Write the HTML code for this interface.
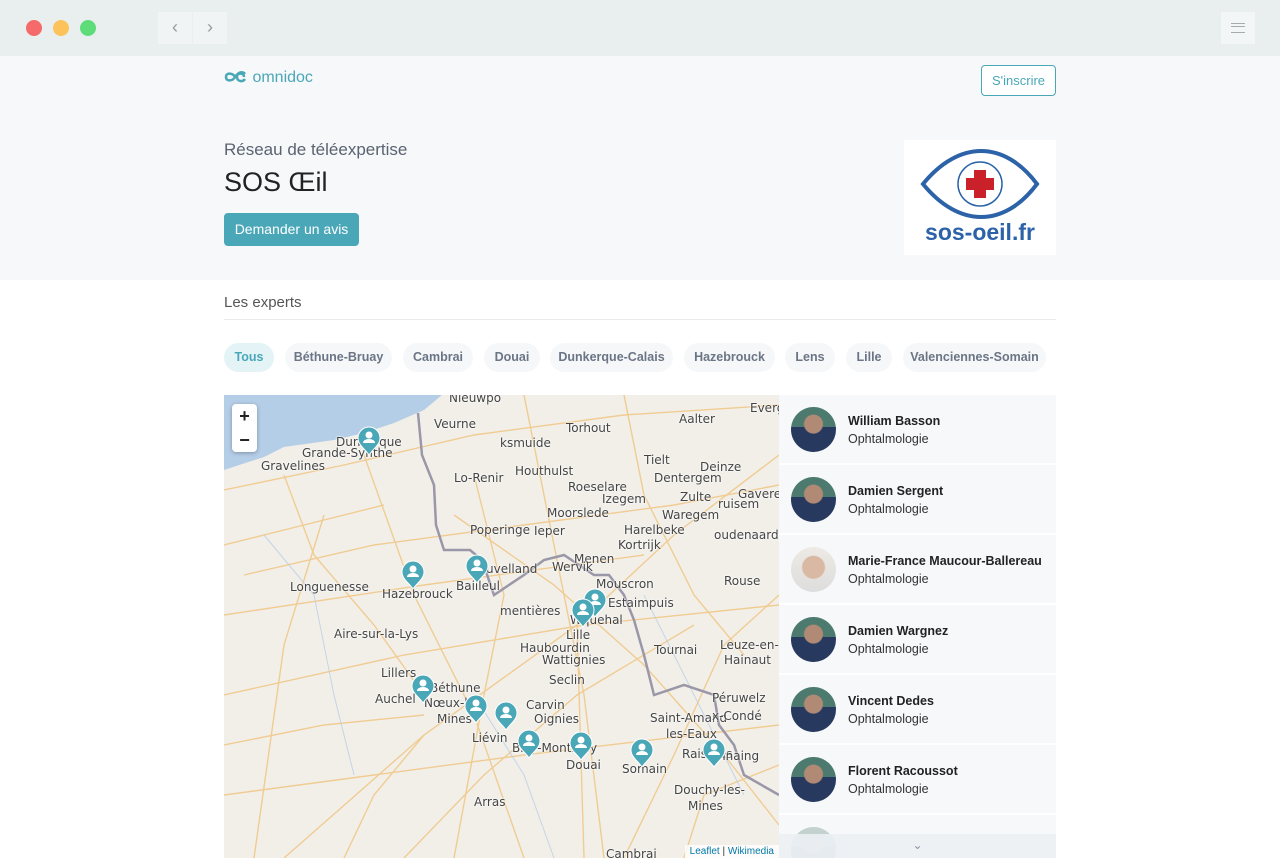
<!DOCTYPE html>
<html><head><meta charset="utf-8"><style>
*{box-sizing:border-box;margin:0;padding:0}
body{width:1280px;height:868px;overflow:hidden;background:#fff;font-family:"Liberation Sans",sans-serif;position:relative}
.chrome{position:absolute;left:0;top:0;width:1280px;height:56px;background:#e9eeee}
.dot{position:absolute;top:20px;width:16px;height:16px;border-radius:50%}
.nav{position:absolute;top:12px;width:34px;height:32px;background:#f1f4f4;color:#999;font-size:18px;text-align:center;line-height:30px}
.hero{position:absolute;left:0;top:56px;width:1280px;height:224px;background:#f7f8fa}
.abs{position:absolute}
.chip{position:absolute;top:343px;height:29px;border-radius:15px;background:#f5f7f9;color:#6b7585;font-size:12.5px;font-weight:bold;line-height:29px;text-align:center}
.map{position:absolute;left:224px;top:395px;width:555px;height:463px;background:#f2efe9;overflow:hidden}
.lbl{position:absolute;font-family:"DejaVu Sans",sans-serif;font-size:12px;color:#444;white-space:nowrap;text-shadow:0 0 2px #fff,0 0 2px #fff}
.row{position:absolute;left:779px;width:277px;height:68px;background:#f7f8fa}
.av{position:absolute;left:12px;top:12px;width:45px;height:45px;border-radius:50%;background:radial-gradient(circle at 50% 38%,#b08a74 0 9px,transparent 10px),linear-gradient(#4d7a6e 0 45%,#27395e 45%)}
.nm{position:absolute;left:69px;top:19px;font-size:12.5px;font-weight:bold;color:#222}
.sp{position:absolute;left:69px;top:37px;font-size:12.5px;color:#333}
</style></head><body>
<div class="chrome">
<div class="dot" style="left:26px;background:#f56a6a"></div>
<div class="dot" style="left:53px;background:#fbc35a"></div>
<div class="dot" style="left:80px;background:#5fdc7a"></div>
<div class="nav" style="left:158px">‹</div><div class="nav" style="left:193px">›</div>
<div class="abs" style="left:1221px;top:12px;width:34px;height:32px;background:#f3f6f6"><div style="position:absolute;left:10px;top:11px;width:14px;border-top:1px solid #aaa;height:4px;border-bottom:1px solid #aaa"></div><div style="position:absolute;left:10px;top:20px;width:14px;border-top:1px solid #aaa"></div></div>
</div>
<div class="hero"></div>
<div class="abs" style="left:224px;top:69px;color:#4aa7b8;font-size:16px">
<svg width="24" height="14" viewBox="0 0 24 14" style="vertical-align:-2px"><path d="M11 7c-2-4-9-5-9 0s7 4 9 0c2-4 9-5 9 0M21 4c-2-3-8-2-8 3s6 5 8 2" fill="none" stroke="#4aa7b8" stroke-width="2.5"/></svg> omnidoc</div>
<div class="abs" style="left:981px;top:65px;width:75px;height:31px;border:1px solid #4aa7b8;border-radius:4px;color:#4aa7b8;font-size:13px;text-align:center;line-height:29px;background:#fff">S'inscrire</div>
<div class="abs" style="left:224px;top:140px;font-size:17px;color:#5a6370">Réseau de téléexpertise</div>
<div class="abs" style="left:224px;top:167px;font-size:27px;color:#222">SOS Œil</div>
<div class="abs" style="left:224px;top:213px;width:135px;height:33px;background:#4aa7b8;border-radius:4px;color:#fff;font-size:14px;text-align:center;line-height:33px">Demander un avis</div>
<div class="abs" style="left:904px;top:140px;width:152px;height:115px;background:#fff">
<svg width="152" height="115"><path d="M19 44C55 0 100 0 133 44C100 88 55 88 19 44Z" fill="none" stroke="#2c63a8" stroke-width="4"/><circle cx="76" cy="44" r="22" fill="none" stroke="#2c63a8" stroke-width="1.5"/><path d="M70 30h12v8h8v12h-8v8h-12v-8h-8v-12h8z" fill="#c9202a"/><text x="76" y="100" text-anchor="middle" font-family="Liberation Sans" font-weight="bold" font-size="23" fill="#2c63a8">sos-oeil.fr</text></svg></div>
<div class="abs" style="left:224px;top:294px;font-size:15px;color:#555">Les experts</div>
<div class="abs" style="left:224px;top:319px;width:832px;border-top:1px solid #e8eaed"></div>
<div class="chip" style="left:224px;width:50px;background:#e3f3f6;color:#4aa7b8">Tous</div>
<div class="chip" style="left:285px;width:107px">Béthune-Bruay</div>
<div class="chip" style="left:403px;width:70px">Cambrai</div>
<div class="chip" style="left:484px;width:56px">Douai</div>
<div class="chip" style="left:550px;width:123px">Dunkerque-Calais</div>
<div class="chip" style="left:684px;width:91px">Hazebrouck</div>
<div class="chip" style="left:785px;width:50px">Lens</div>
<div class="chip" style="left:846px;width:46px">Lille</div>
<div class="chip" style="left:903px;width:143px">Valenciennes-Somain</div>
<div class="map">
<svg width="555" height="463" style="position:absolute;left:0;top:0">
<path d="M0 75L40 62L60 52L110 45L140 38L170 28L200 15L218 0L0 0Z" fill="#b5cee8"/>
<g fill="none" stroke="#f0c98a" stroke-width="1.4" opacity=".9">
<path d="M0 95L120 70L250 40L400 20L555 10"/><path d="M20 180L150 150L300 130L450 110L555 90"/><path d="M0 300L180 260L360 230L555 210"/><path d="M60 463L200 340L353 230L450 140L555 60"/><path d="M140 60L190 200L250 320L300 463"/><path d="M300 0L330 150L360 300L380 463"/><path d="M0 400L150 380L300 360L555 330"/><path d="M400 463L450 360L500 250L555 200"/><path d="M100 120L60 250L30 463"/><path d="M230 120L330 190L420 270L500 360L555 430"/><path d="M0 220L200 190L420 160"/><path d="M180 463L260 380L353 300L470 230"/><path d="M353 230L360 463"/><path d="M250 80L280 200L260 300L230 463"/><path d="M0 150L80 130L160 110"/><path d="M60 80L90 160L150 230L200 300"/><path d="M400 0L420 100L470 200L520 260"/><path d="M0 350L100 330L200 320"/><path d="M120 463L150 400L200 340"/><path d="M460 463L480 400L555 370"/></g>
<g fill="none" stroke="#b8cde6" stroke-width="1" opacity=".8"><path d="M40 140L90 200L110 300L130 380"/><path d="M420 200L470 300L520 400"/><path d="M250 300L300 380L330 463"/></g>
<path d="M194 18L198 60L210 90L212 130L220 155L246 155L258 165L270 200L300 180L320 165L340 160L355 170L370 180L385 180L400 200L410 225L420 260L430 300L460 290L490 300L495 330L510 350L520 380L555 400" fill="none" stroke="#9a97a8" stroke-width="2.5"/>
</svg>
<div class="abs" style="left:8px;top:9px;width:25px;height:48px;background:#fff;border-radius:4px;box-shadow:0 1px 4px rgba(0,0,0,.3);font-size:18px;font-weight:bold;text-align:center;line-height:24px;color:#222">+<br>−</div>
<div class="lbl" style="left:225px;top:-4px">Nieuwpo</div><div class="lbl" style="left:210px;top:22px">Veurne</div><div class="lbl" style="left:342px;top:26px">Torhout</div><div class="lbl" style="left:455px;top:17px">Aalter</div><div class="lbl" style="left:526px;top:6px">Everg</div>
<div class="lbl" style="left:112px;top:40px">Dunkerque</div><div class="lbl" style="left:78px;top:51px">Grande-Synthe</div><div class="lbl" style="left:37px;top:64px">Gravelines</div>
<div class="lbl" style="left:276px;top:41px">ksmuide</div><div class="lbl" style="left:420px;top:58px">Tielt</div><div class="lbl" style="left:476px;top:65px">Deinze</div><div class="lbl" style="left:291px;top:69px">Houthulst</div><div class="lbl" style="left:344px;top:85px">Roeselare</div><div class="lbl" style="left:430px;top:76px">Dentergem</div><div class="lbl" style="left:230px;top:76px">Lo-Renir</div><div class="lbl" style="left:378px;top:97px">Izegem</div><div class="lbl" style="left:456px;top:95px">Zulte</div><div class="lbl" style="left:514px;top:92px">Gavere</div><div class="lbl" style="left:323px;top:111px">Moorslede</div><div class="lbl" style="left:246px;top:128px">Poperinge</div><div class="lbl" style="left:310px;top:129px">Ieper</div><div class="lbl" style="left:400px;top:128px">Harelbeke</div><div class="lbl" style="left:438px;top:113px">Waregem</div><div class="lbl" style="left:494px;top:102px">ruisem</div><div class="lbl" style="left:394px;top:143px">Kortrijk</div><div class="lbl" style="left:490px;top:133px">oudenaarde</div><div class="lbl" style="left:350px;top:157px">Menen</div><div class="lbl" style="left:328px;top:165px">Wervik</div><div class="lbl" style="left:262px;top:167px">uvelland</div>
<div class="lbl" style="left:66px;top:185px">Longuenesse</div><div class="lbl" style="left:158px;top:192px">Hazebrouck</div><div class="lbl" style="left:232px;top:184px">Bailleul</div><div class="lbl" style="left:372px;top:182px">Mouscron</div><div class="lbl" style="left:384px;top:201px">Estaimpuis</div><div class="lbl" style="left:500px;top:179px">Rouse</div><div class="lbl" style="left:276px;top:209px">mentières</div><div class="lbl" style="left:346px;top:218px">Wquehal</div><div class="lbl" style="left:342px;top:233px">Lille</div><div class="lbl" style="left:110px;top:232px">Aire-sur-la-Lys</div><div class="lbl" style="left:296px;top:246px">Haubourdin</div><div class="lbl" style="left:318px;top:258px">Wattignies</div><div class="lbl" style="left:430px;top:248px">Tournai</div><div class="lbl" style="left:496px;top:243px">Leuze-en-</div><div class="lbl" style="left:500px;top:258px">Hainaut</div><div class="lbl" style="left:325px;top:278px">Seclin</div><div class="lbl" style="left:157px;top:271px">Lillers</div><div class="lbl" style="left:206px;top:286px">Béthune</div><div class="lbl" style="left:151px;top:297px">Auchel</div><div class="lbl" style="left:200px;top:301px">Nœux-l</div><div class="lbl" style="left:302px;top:303px">Carvin</div><div class="lbl" style="left:488px;top:296px">Péruwelz</div><div class="lbl" style="left:213px;top:317px">Mines</div><div class="lbl" style="left:310px;top:317px">Oignies</div><div class="lbl" style="left:426px;top:316px">Saint-Amand</div><div class="lbl" style="left:488px;top:314px">x-Condé</div><div class="lbl" style="left:248px;top:336px">Liévin</div><div class="lbl" style="left:442px;top:332px">les-Eaux</div><div class="lbl" style="left:288px;top:346px">Billy-Montigny</div><div class="lbl" style="left:342px;top:363px">Douai</div><div class="lbl" style="left:398px;top:367px">Somain</div><div class="lbl" style="left:458px;top:352px">Raismes</div><div class="lbl" style="left:494px;top:354px">nnaing</div><div class="lbl" style="left:450px;top:388px">Douchy-les-</div><div class="lbl" style="left:464px;top:404px">Mines</div><div class="lbl" style="left:250px;top:400px">Arras</div><div class="lbl" style="left:382px;top:452px">Cambrai</div>
<svg width="555" height="463" style="position:absolute;left:0;top:0">
<defs><g id="pin"><path d="M0 0C-4-6-11-10-11-17A11 11 0 0 1 11-17C11-10 4-6 0 0Z" fill="#4aa7b8" stroke="#fff" stroke-width="1"/><circle cx="0" cy="-20" r="3.5" fill="#fff"/><path d="M-6-12a6 4 0 0 1 12 0z" fill="#fff"/></g></defs>
<use href="#pin" x="145" y="60"/><use href="#pin" x="189" y="194"/><use href="#pin" x="253" y="188"/><use href="#pin" x="371" y="222"/><use href="#pin" x="359" y="232"/><use href="#pin" x="199" y="308"/><use href="#pin" x="252" y="328"/><use href="#pin" x="282" y="335"/><use href="#pin" x="305" y="363"/><use href="#pin" x="357" y="365"/><use href="#pin" x="418" y="372"/><use href="#pin" x="490" y="372"/>
</svg>
<div class="abs" style="right:0;bottom:0;background:rgba(255,255,255,.8);font-size:10px;color:#0078a8;padding:1px 5px">Leaflet <span style="color:#333">|</span> Wikimedia</div>
</div>
<div class="row" style="top:395px"><div class="av"></div><div class="nm">William Basson</div><div class="sp">Ophtalmologie</div></div>
<div class="row" style="top:465px"><div class="av"></div><div class="nm">Damien Sergent</div><div class="sp">Ophtalmologie</div></div>
<div class="row" style="top:535px"><div class="av" style="background:radial-gradient(circle at 50% 45%,#d9b9a3 0 11px,transparent 12px),linear-gradient(#eeeae4,#ddd)"></div><div class="nm">Marie-France Maucour-Ballereau</div><div class="sp">Ophtalmologie</div></div>
<div class="row" style="top:605px"><div class="av"></div><div class="nm">Damien Wargnez</div><div class="sp">Ophtalmologie</div></div>
<div class="row" style="top:675px"><div class="av"></div><div class="nm">Vincent Dedes</div><div class="sp">Ophtalmologie</div></div>
<div class="row" style="top:745px"><div class="av"></div><div class="nm">Florent Racoussot</div><div class="sp">Ophtalmologie</div></div>
<div class="row" style="top:815px;height:43px;overflow:hidden"><div class="av" style="opacity:.3"></div></div>
<div class="abs" style="left:779px;top:834px;width:277px;height:24px;background:rgba(235,239,243,.9);text-align:center;color:#8a94a6;font-size:12px;line-height:22px">⌄</div>
</body></html>
